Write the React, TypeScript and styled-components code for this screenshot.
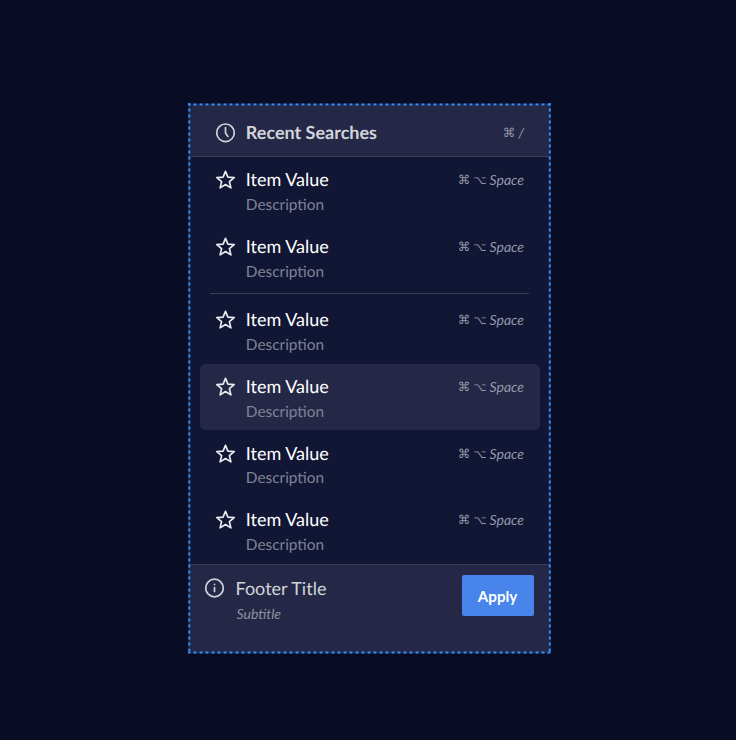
import React from 'react';
import styled, { createGlobalStyle } from 'styled-components';

const GlobalStyle = createGlobalStyle`
  * { box-sizing: border-box; }
  body { margin: 0; background: #080c25; font-family: Lato, "Liberation Sans", sans-serif; text-rendering: geometricPrecision; }
`;

const Page = styled.main`
  width: 736px;
  height: 740px;
  padding: 104px 0 0 189px;
  background: #080c25;
`;

const Panel = styled.section`
  position: relative;
  display: flex;
  flex-direction: column;
  width: 361px;
  height: 549px;
  background: #111635;
`;

const Outline = styled.svg`
  position: absolute;
  inset: -1px;
  width: 363px;
  height: 551px;
  pointer-events: none;
`;

const Header = styled.header`
  display: flex;
  align-items: center;
  height: 53px;
  padding: 5px 26px 0 25.5px;
  background: #242846;
  border-bottom: 1.5px solid #3b3e58;
  color: #d3d4da;
`;

const Heading = styled.h2`
  flex: 1;
  margin: 0 0 1.6px 10.3px;
  font-size: 18px;
  line-height: 24px;
  font-weight: 700;
`;

const List = styled.ul`
  margin: 0;
  padding: 0 10.5px;
  list-style: none;
`;

const Item = styled.li<{ $active?: boolean }>`
  display: flex;
  align-items: flex-start;
  height: 66.7px;
  padding: 11.2px 15.5px 0 15px;
  border-radius: 5px;
  background: ${(p) => (p.$active ? '#242846' : 'transparent')};
  color: #e9eaee;
`;

const ItemText = styled.div`
  flex: 1;
  margin-left: 10.3px;
`;

const ItemTitle = styled.div`
  color: #fff;
  font-size: 18px;
  line-height: 22.8px;
`;

const Description = styled.div`
  color: #7f8296;
  font-size: 15.4px;
  line-height: 28px;
`;

const Shortcut = styled.span`
  display: flex;
  align-items: center;
  height: 24px;
  color: #9698a8;
  font-size: 14px;
  font-style: italic;
  line-height: 22px;
`;

const KeyGlyph = styled.span<{ $size: number }>`
  margin-right: 3px;
  font-family: "DejaVu Sans", sans-serif;
  font-size: ${(p) => p.$size}px;
  font-style: normal;
  font-weight: 200;
`;

const Divider = styled.li`
  height: 6.6px;
  margin: 0 10.5px;
  padding-top: 2.7px;
  &::after {
    content: '';
    display: block;
    height: 1px;
    background: #393c57;
  }
`;

const Footer = styled.footer`
  display: flex;
  align-items: flex-start;
  flex: 1;
  padding: 10px 16.4px 0 15.3px;
  background: #242846;
  border-top: 1px solid #3b3e58;
  color: #d3d4da;
`;

const FooterText = styled.div`
  flex: 1;
  margin-left: 10.2px;
`;

const FooterTitle = styled.div`
  font-size: 18px;
  line-height: 26px;
`;

const Subtitle = styled.div`
  color: #8e909f;
  font-size: 14px;
  font-style: italic;
  line-height: 26px;
  margin-left: 1px;
`;

const ApplyButton = styled.button`
  width: 72px;
  height: 41px;
  padding: 2px 0 0;
  border: 0;
  border-radius: 2px;
  background: #4785eb;
  color: #fff;
  font: 700 15.2px Lato, sans-serif;
`;

const Icon = styled.svg`
  flex: none;
  width: 21px;
  height: 24px;
  overflow: visible;
  fill: none;
  stroke: currentColor;
  stroke-width: 1.7;
  stroke-linecap: round;
  stroke-linejoin: round;
`;

const ClockIcon = () => (
  <Icon viewBox="0 0 21 24">
    <circle cx="10.5" cy="11.8" r="8.8" />
    <path d="M10.5 6.5V12l2.4 3.4" />
  </Icon>
);

const StarIcon = () => (
  <Icon viewBox="0 0 21 24">
    <path d="M10.5 3.3l2.4 5.8 6.3.5-4.8 4.1 1.5 6.2-5.4-3.4-5.4 3.4 1.5-6.2-4.8-4.1 6.3-.5z" />
  </Icon>
);

const InfoIcon = () => (
  <Icon viewBox="0 0 21 24">
    <circle cx="10.5" cy="13" r="8.8" />
    <path d="M10.5 12.6v3.9M10.5 9.4v.1" />
  </Icon>
);

const Row = ({ active }: { active?: boolean }) => (
  <Item $active={active}>
    <StarIcon />
    <ItemText>
      <ItemTitle>Item Value</ItemTitle>
      <Description>Description</Description>
    </ItemText>
    <Shortcut>
      <KeyGlyph $size={12.5}>⌘</KeyGlyph>
      <KeyGlyph $size={11.5}>⌥</KeyGlyph>
      Space
    </Shortcut>
  </Item>
);

export default function App() {
  return (
    <>
      <GlobalStyle />
      <Page>
        <Panel>
          <Header>
            <ClockIcon />
            <Heading>Recent Searches</Heading>
            <Shortcut>
              <KeyGlyph $size={12.5}>⌘</KeyGlyph>/
            </Shortcut>
          </Header>
          <List>
            <Row />
            <Row />
            <Divider />
            <Row />
            <Row active />
            <Row />
            <Row />
          </List>
          <Footer>
            <InfoIcon />
            <FooterText>
              <FooterTitle>Footer Title</FooterTitle>
              <Subtitle>Subtitle</Subtitle>
            </FooterText>
            <ApplyButton>Apply</ApplyButton>
          </Footer>
          <Outline viewBox="0 0 363 551" fill="none">
            <path d="M1 1.5H362M1 549.4H362M1.3 1V550M361.8 1V550" stroke="#172b58" strokeWidth="2" />
            <path d="M0 1.5H363M0 549.4H363" stroke="#3f8aeb" strokeWidth="2" strokeDasharray="3 3" strokeDashoffset="0.5" />
            <path d="M1.3 0V550M361.8 0V550" stroke="#3f8aeb" strokeWidth="2" strokeDasharray="3 3" strokeDashoffset="0.5" />
          </Outline>
        </Panel>
      </Page>
    </>
  );
}
